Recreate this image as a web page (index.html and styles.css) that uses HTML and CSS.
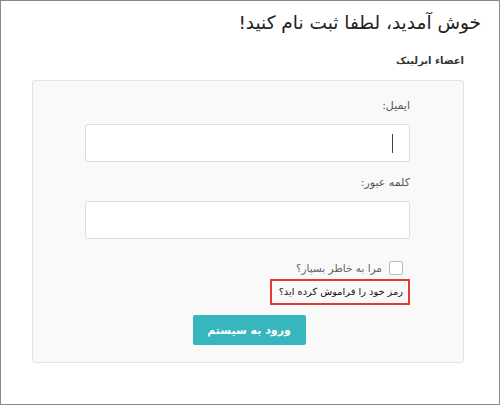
FILE: index.html
```html
<!DOCTYPE html>
<html lang="fa" dir="rtl">
<head>
<meta charset="utf-8">
<link rel="stylesheet" href="styles.css">
</head>
<body>
<div class="frame">
  <h1 class="title">خوش آمدید، لطفا ثبت نام کنید!</h1>
  <h2 class="subtitle">اعضاء ابرلینک</h2>
  <div class="panel">
    <form class="form">
      <label class="label">ایمیل:</label>
      <div class="input"><span class="caret"></span></div>
      <label class="label label2">کلمه عبور:</label>
      <div class="input"></div>
      <div class="remember">
        <span class="checkbox"></span>
        <span class="remember-text">مرا به خاطر بسپار؟</span>
      </div>
      <div class="forgot">رمز خود را فراموش کرده اید؟</div>
      <div class="actions">
        <button type="button" class="btn">ورود به سیستم</button>
      </div>
    </form>
  </div>
</div>
</body>
</html>
```
FILE: styles.css
```css
* { box-sizing: border-box; }
html, body { margin: 0; padding: 0; background: #fff; }
body { font-family: "DejaVu Sans", "Noto Sans", sans-serif; color: #333; }
.frame {
  width: 500px; height: 405px;
  border: 1px solid #8a8a8a;
  padding: 0 35px 0 31px;
  direction: rtl;
}
.title {
  margin: 0; padding: 7px 0 0 0;
  font-size: 18.5px; font-weight: normal; line-height: 30px;
  margin-right: -17px;
  color: #222;
}
.subtitle {
  margin: 15px 0 0 0; font-size: 10px; font-weight: bold; line-height: 16px; color: #333;
}
.panel {
  margin-top: 11px;
  height: 283px;
  background: #f9f9f9;
  border: 1px solid #e4e4e4;
  border-radius: 3px;
  padding: 16px 53px 0 52px;
}
.form { display: flex; flex-direction: column; align-items: stretch; }
.label { font-size: 11px; color: #555; line-height: 18px; display: block; }
.label2 { margin-top: 12px; }
.input {
  margin-top: 9px;
  height: 38px; background: #fff;
  border: 1px solid #ddd; border-radius: 3px;
  position: relative;
}
.caret {
  position: absolute; right: 16px; top: 9px;
  width: 1px; height: 19px; background: #444;
}
.remember { display: flex; align-items: center; gap: 7px; margin-top: 22px; padding-right: 7px; height: 14px; }
.checkbox { width: 14px; height: 14px; border: 1px solid #bbb; background: #fff; border-radius: 2px; }
.remember-text { font-size: 10.5px; color: #666; }
.forgot {
  align-self: flex-start;
  margin-top: 4px;
  width: 140px; height: 26px;
  border: 2px solid #e53935;
  white-space: nowrap;
  font-size: 9.8px; color: #111; padding: 2px 5px 0 0; line-height: 18px;
}
.actions { display: flex; justify-content: center; margin-top: 10px; padding-left: 3px; }
.btn {
  width: 113px; height: 30px;
  background: #37b6bd; color: #fff; border: none; border-radius: 2px;
  font-family: inherit; font-weight: bold; font-size: 11px;
}
```
